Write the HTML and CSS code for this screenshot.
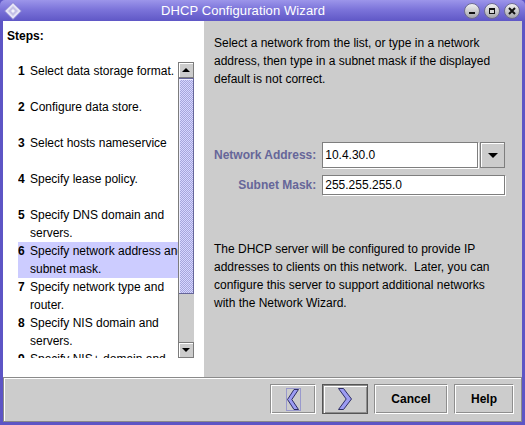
FILE: index.html
```html
<!DOCTYPE html>
<html>
<head>
<meta charset="utf-8">
<title>DHCP Configuration Wizard</title>
<link rel="stylesheet" href="styles.css">
</head>
<body>
<div class="window">
  <div class="titlebar">
    <div class="app-icon">
      <svg width="18" height="18" viewBox="0 0 18 18">
        <polygon points="9,0.5 17.5,9 9,17.5 0.5,9" fill="#e6e4f6" stroke="#7c76d0"/>
        <polygon points="9,4 14,9 9,14 4,9" fill="#c4c0e6"/>
        <polygon points="9,7 11,9 9,11 7,9" fill="#f4f4fc"/>
      </svg>
    </div>
    <div class="title">DHCP Configuration Wizard</div>
    <div class="wm-buttons">
      <span class="wm-btn">
        <svg width="16" height="16" viewBox="0 0 16 16">
          <defs><linearGradient id="g1" x1="0" y1="0" x2="0" y2="1"><stop offset="0" stop-color="#f4f4f4"/><stop offset="1" stop-color="#a2a2a8"/></linearGradient></defs>
          <circle cx="8" cy="8" r="7.5" fill="url(#g1)" stroke="#6c6a90"/>
          <rect x="5" y="9" width="6" height="2" fill="#111"/>
        </svg>
      </span>
      <span class="wm-btn">
        <svg width="16" height="16" viewBox="0 0 16 16">
          <circle cx="8" cy="8" r="7.5" fill="url(#g1)" stroke="#6c6a90"/>
          <rect x="5" y="5" width="6" height="6" fill="#111"/>
          <rect x="6" y="7" width="4" height="3" fill="#d8d8d8"/>
        </svg>
      </span>
      <span class="wm-btn">
        <svg width="16" height="16" viewBox="0 0 16 16">
          <circle cx="8" cy="8" r="7.5" fill="url(#g1)" stroke="#6c6a90"/>
          <path d="M5 5 L11 11 M11 5 L5 11" stroke="#111" stroke-width="2"/>
        </svg>
      </span>
    </div>
  </div>

  <div class="frame">
    <div class="main">
      <div class="steps-panel">
        <div class="steps-title">Steps:</div>
        <div class="steps-view">
          <ol class="steps-list">
            <li class="step"><span class="num">1</span><span class="lines"><span>Select data storage format.</span></span></li>
            <li class="step"><span class="num">2</span><span class="lines"><span>Configure data store.</span></span></li>
            <li class="step"><span class="num">3</span><span class="lines"><span>Select hosts nameservice</span></span></li>
            <li class="step"><span class="num">4</span><span class="lines"><span>Specify lease policy.</span></span></li>
            <li class="step"><span class="num">5</span><span class="lines"><span>Specify DNS domain and</span><span>servers.</span></span></li>
            <li class="step current"><span class="num">6</span><span class="lines"><span>Specify network address and</span><span>subnet mask.</span></span></li>
            <li class="step"><span class="num">7</span><span class="lines"><span>Specify network type and</span><span>router.</span></span></li>
            <li class="step"><span class="num">8</span><span class="lines"><span>Specify NIS domain and</span><span>servers.</span></span></li>
            <li class="step"><span class="num">9</span><span class="lines"><span>Specify NIS+ domain and</span><span>servers.</span></span></li>
          </ol>
          <div class="scrollbar">
            <div class="sb-btn"><span class="tri-up"></span></div>
            <div class="sb-thumb"></div>
            <div class="sb-track"></div>
            <div class="sb-btn"><span class="tri-down"></span></div>
          </div>
        </div>
      </div>

      <div class="content-panel">
        <p class="text">Select a network from the list, or type in a network<br>address, then type in a subnet mask if the displayed<br>default is not correct.</p>
        <div class="form">
          <label class="label">Network Address:</label>
          <div class="combo">
            <div class="field">10.4.30.0</div>
            <div class="combo-btn"><span class="tri-down"></span></div>
          </div>
          <label class="label">Subnet Mask:</label>
          <div class="field">255.255.255.0</div>
        </div>
        <p class="text note">The DHCP server will be configured to provide IP<br>addresses to clients on this network.&nbsp; Later, you can<br>configure this server to support additional networks<br>with the Network Wizard.</p>
      </div>
    </div>

    <div class="buttonbar">
      <button class="btn btn-nav">
        <span class="focus">
          <svg width="12" height="21" viewBox="0 0 12 21"><polygon points="7,0.5 11.5,0.5 4.8,10.5 11.5,20.5 7,20.5 0.5,10.5" fill="#9c9cf2" stroke="#2e2e66"/></svg>
        </span>
      </button>
      <button class="btn btn-nav btn-default">
        <svg width="14" height="22" viewBox="0 0 14 22"><polygon points="0.5,0.5 5.5,0.5 13.5,11 5.5,21.5 0.5,21.5 8.2,11" fill="#9c9cf2" stroke="#2e2e66"/></svg>
      </button>
      <button class="btn btn-cancel">Cancel</button>
      <button class="btn btn-help">Help</button>
    </div>
  </div>
</div>
</body>
</html>
```

FILE: styles.css
```css
* { box-sizing: border-box; }
html, body { margin: 0; padding: 0; }
body {
  width: 525px;
  height: 425px;
  overflow: hidden;
  font-family: "Liberation Sans", Arial, sans-serif;
  font-size: 12px;
  color: #000;
  background: #5d55c5;
}

.window {
  width: 525px;
  height: 425px;
  display: flex;
  flex-direction: column;
  background: #5d55c5;
  border-radius: 5px 5px 0 0;
  overflow: hidden;
}

/* Title bar */
.titlebar {
  height: 21px;
  flex: none;
  display: flex;
  align-items: center;
  padding: 0 5px 0 4px;
  background: linear-gradient(#9c95ea, #7c74da 45%, #5f57c6);
  color: #fff;
}
.app-icon { width: 18px; height: 18px; display: flex; }
.title {
  flex: 1;
  text-align: center;
  font-size: 13px;
  line-height: 21px;
  letter-spacing: 0.1px;
}
.wm-buttons { display: flex; gap: 4px; }
.wm-btn { width: 16px; height: 16px; display: flex; }

/* Frame */
.frame {
  flex: 1;
  display: flex;
  flex-direction: column;
  padding: 0 3px 3px 3px;
  min-height: 0;
}
.main {
  flex: 1;
  display: flex;
  min-height: 0;
}

/* Steps panel */
.steps-panel {
  width: 201px;
  flex: none;
  background: #fff;
}
.steps-title {
  font-weight: bold;
  line-height: 18px;
  padding: 6px 0 0 4px;
}
.steps-view {
  margin: 17px 0 0 15px;
  width: 176px;
  height: 296px;
  display: flex;
  overflow: hidden;
}
.steps-list {
  flex: 1;
  min-width: 0;
  list-style: none;
  margin: 0;
  padding: 0;
  overflow: hidden;
}
.step {
  height: 36px;
  display: grid;
  grid-template-columns: 12px 1fr;
  line-height: 18px;
}
.step.current { background: #ccccff; }
.num { font-weight: bold; }
.lines { min-width: 0; overflow: hidden; }
.lines span { display: block; white-space: nowrap; }

/* Scrollbar */
.scrollbar {
  width: 16px;
  flex: none;
  display: flex;
  flex-direction: column;
  background: #cccccc;
  border-left: 1px solid #7c7c7c;
}
.sb-btn {
  height: 16px;
  flex: none;
  display: flex;
  align-items: center;
  justify-content: center;
  background: #cccccc;
  border: 1px solid #7c7c7c;
  border-left: none;
  box-shadow: inset 1px 1px 0 #fff;
}
.sb-thumb {
  height: 216px;
  flex: none;
  border: 1px solid #66669a;
  border-left: none;
  background-color: #ccccff;
  background-image: repeating-conic-gradient(#a6a6dc 0 25%, #d6d6ff 0 50%);
  background-size: 2px 2px;
  box-shadow: inset 1px 1px 0 #eeeeff;
}
.sb-track {
  flex: 1;
  background: #cccccc;
}
.tri-up {
  width: 0; height: 0;
  border-left: 4px solid transparent;
  border-right: 4px solid transparent;
  border-bottom: 4px solid #000;
}
.tri-down {
  width: 0; height: 0;
  border-left: 4px solid transparent;
  border-right: 4px solid transparent;
  border-top: 4px solid #000;
}

/* Content panel */
.content-panel {
  flex: 1;
  background: #cccccc;
  padding: 13px 10px 0 10px;
}
.text {
  margin: 0;
  line-height: 18px;
  white-space: nowrap;
}
.note { margin-top: 45px; }
.form {
  margin-top: 54px;
  display: grid;
  grid-template-columns: auto 183px;
  grid-template-rows: 26px 20px;
  column-gap: 6px;
  row-gap: 7px;
  align-items: center;
  justify-content: start;
}
.label {
  text-align: right;
  font-weight: bold;
  white-space: nowrap;
  color: #666699;
}
.combo {
  display: flex;
  gap: 2px;
  height: 26px;
}
.field {
  height: 100%;
  flex: 1;
  display: flex;
  align-items: center;
  padding-left: 2px;
  background: #fff;
  border: 1px solid #7e7e7e;
  box-shadow: 1px 1px 0 #fff;
}
.combo-btn {
  width: 25px;
  flex: none;
  display: flex;
  align-items: center;
  justify-content: center;
  background: #cccccc;
  border: 1px solid #7e7e7e;
  box-shadow: inset 1px 1px 0 #fff;
}
.combo-btn .tri-down {
  border-left-width: 5px;
  border-right-width: 5px;
  border-top-width: 5px;
}

/* Button bar */
.buttonbar {
  height: 45px;
  flex: none;
  display: flex;
  justify-content: flex-end;
  align-items: flex-start;
  gap: 6px;
  padding: 6px 7px 0 0;
  background: #cccccc;
  border: 1px solid #8a8a8a;
  box-shadow: inset 1px 1px 0 #fff;
}
.btn {
  height: 30px;
  margin: 0;
  padding: 0;
  display: flex;
  align-items: center;
  justify-content: center;
  font-family: "Liberation Sans", Arial, sans-serif;
  font-size: 12px;
  font-weight: bold;
  color: #000;
  background: #cccccc;
  border: 1px solid;
  border-color: #8e8e8e #fff #fff #8e8e8e;
  box-shadow: inset 1px 1px 0 #fff, inset -1px -1px 0 #8e8e8e;
}
.btn-nav { width: 46px; }
.btn-default {
  border: 1px solid #555;
  box-shadow: inset 1px 1px 0 #8e8e8e, inset 2px 2px 0 #fff, inset -1px -1px 0 #8e8e8e;
}
.btn-cancel { width: 74px; }
.btn-help { width: 60px; }
.focus {
  width: 15px;
  height: 23px;
  display: flex;
  align-items: center;
  justify-content: center;
  border: 1px solid #9999cc;
}
```
